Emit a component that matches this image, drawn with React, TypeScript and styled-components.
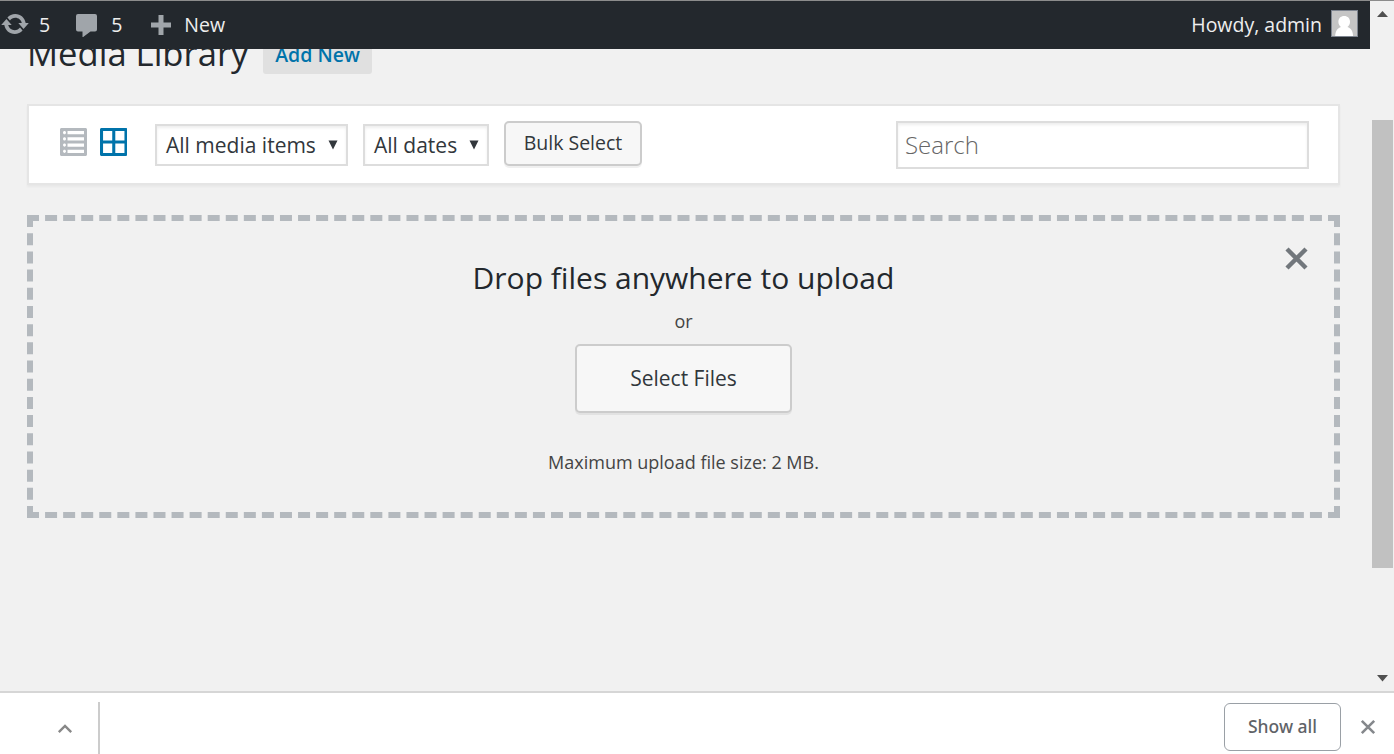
import React from "react";
import styled, { createGlobalStyle } from "styled-components";

const GlobalStyle = createGlobalStyle`
  * { box-sizing: border-box; }
  body {
    margin: 0;
    background: #f1f1f1;
    font-family: "Open Sans", "Noto Sans", sans-serif;
    color: #444;
    overflow: hidden;
  }
  button, input { font-family: inherit; margin: 0; }
  svg { display: block; flex: none; }
`;

const Window = styled.div`
  width: 1394px;
  height: 754px;
  display: flex;
  flex-direction: column;
  border-top: 1px solid #8c8c8c;
  overflow: hidden;
`;

const Viewport = styled.div`
  height: 690px;
  display: flex;
  flex: none;
`;

const Screen = styled.div`
  width: 1370px;
  display: flex;
  flex-direction: column;
`;

const AdminBar = styled.header`
  height: 48px;
  flex: none;
  background: #23282d;
  color: #eee;
  display: flex;
  align-items: center;
  padding: 0 12px 0 0;
  font-size: 19.5px;
`;

const BarItem = styled.div<{ $gap: number; $before?: number }>`
  display: flex;
  align-items: center;
  gap: ${(p) => p.$gap}px;
  margin-left: ${(p) => p.$before ?? 0}px;
  line-height: 30px;
  white-space: nowrap;
`;

const RefreshIcon = styled.svg`
  margin-bottom: 2px;
`;

const Account = styled(BarItem)`
  margin-left: auto;
`;

const Avatar = styled.span`
  width: 27px;
  height: 27px;
  margin-top: -3px;
  border: 1px solid #7e8590;
  background: #c5c5c5;
  overflow: hidden;
`;

const Body = styled.main`
  flex: 1;
  min-height: 0;
  overflow: hidden;
  padding: 0 30px 0 27px;
  display: flex;
  flex-direction: column;
`;

const Heading = styled.div`
  display: flex;
  align-items: flex-end;
  height: 44px;
  margin-top: -19px;
  margin-bottom: 30px;
  flex: none;
`;

const Title = styled.h1`
  margin: 0;
  font-size: 34.6px;
  line-height: 42px;
  font-weight: 400;
  color: #23282d;
  width: 236px;
  white-space: nowrap;
`;

const AddNew = styled.button`
  width: 109px;
  height: 39px;
  border: 0;
  border-radius: 3px;
  background: #e0e0e0;
  color: #0073aa;
  font-size: 19.5px;
  font-weight: 600;
  line-height: 39px;
  padding: 0;
`;

const Toolbar = styled.section`
  height: 81px;
  flex: none;
  display: flex;
  align-items: flex-start;
  padding: 15px 29px 0 31px;
  background: #fff;
  border: 2px solid #e5e5e5;
  box-shadow: 0 2px 2px rgba(0, 0, 0, 0.04);
`;

const Views = styled.div`
  display: flex;
  gap: 12.5px;
  margin: 7px 28px 0 0;
`;

const Select = styled.div<{ $width: number }>`
  width: ${(p) => p.$width}px;
  height: 42px;
  margin: 3px 15px 0 0;
  padding: 0 8px 0 9px;
  display: flex;
  align-items: center;
  justify-content: space-between;
  border: 2px solid #ddd;
  box-shadow: inset 0 2px 3px rgba(0, 0, 0, 0.07);
  color: #32373c;
  font-size: 21px;
  white-space: nowrap;
`;

const Button = styled.button<{ $large?: boolean }>`
  width: ${(p) => (p.$large ? 217 : 138)}px;
  height: ${(p) => (p.$large ? 69 : 45)}px;
  padding: 0 0 2px;
  border: 2px solid #ccc;
  border-radius: 5px;
  background: #f7f7f7;
  box-shadow: 0 2px 0 rgba(0, 0, 0, 0.06);
  color: #32373c;
  font-size: ${(p) => (p.$large ? 21 : 19.5)}px;
`;

const Search = styled.input`
  width: 413px;
  height: 48px;
  margin-left: auto;
  padding: 0 7px 2px;
  border: 2px solid #ddd;
  border-radius: 0;
  background: #fff;
  box-shadow: inset 0 2px 3px rgba(0, 0, 0, 0.07);
  font-size: 24px;
  font-weight: 300;
  outline: none;
  &::placeholder { color: #666; opacity: 1; }
`;

const DropZone = styled.section`
  position: relative;
  height: 303px;
  flex: none;
  margin-top: 30px;
  border: 6px dashed #b4b9be;
  display: flex;
  flex-direction: column;
  align-items: center;
`;

const DropTitle = styled.h2`
  margin: 36px 0 0;
  font-size: 30px;
  line-height: 42px;
  font-weight: 400;
  color: #23282d;
  white-space: nowrap;
`;

const Note = styled.p<{ $top: number }>`
  margin: ${(p) => p.$top}px 0 0;
  font-size: 18px;
  line-height: 28px;
  white-space: nowrap;
`;

const SelectFiles = styled.div`
  margin-top: 9px;
  height: 69px;
`;

const Close = styled.span`
  position: absolute;
  right: 26px;
  top: 26px;
`;

const Scrollbar = styled.aside`
  width: 24px;
  padding: 9px 1px 9px 2px;
  background: #f1f1f1;
  display: flex;
  flex-direction: column;
  align-items: center;
`;

const Thumb = styled.div`
  width: 21px;
  height: 448px;
  margin-top: 103px;
  margin-bottom: auto;
  background: #c1c1c1;
`;

const Shelf = styled.footer`
  flex: 1;
  display: flex;
  align-items: flex-start;
  background: #fff;
  border-top: 2px solid #d6d6d6;
  padding-right: 18px;
`;

const Download = styled.div`
  width: 100px;
  height: 52px;
  margin-top: 9px;
  border-right: 2px solid #ccc;
  padding: 22px 0 0 57px;
`;

const ShowAll = styled.button`
  width: 117px;
  height: 48px;
  margin: 10px 19px 0 auto;
  padding: 0 0 2px;
  border: 1px solid #9aa0a6;
  border-radius: 6px;
  background: #fff;
  color: #5f6368;
  font-family: "Noto Sans", "Open Sans", sans-serif;
  font-size: 17.5px;
  font-weight: 500;
`;

const Dismiss = styled.span`
  margin-top: 26px;
`;

const Arrow = () => (
  <svg width="10" height="10" viewBox="0 0 10 10">
    <path d="M0.500 0.500h9L5 9.600z" fill="#32373c" />
  </svg>
);

export default function App() {
  return (
    <>
      <GlobalStyle />
      <Window>
        <Viewport>
          <Screen>
            <AdminBar>
              <BarItem $gap={9}>
                <RefreshIcon width="30" height="30" viewBox="0 0 20 20" fill="#a0a5aa">
                  <path d="M10.2 3.28c3.53 0 6.43 2.61 6.92 6h2.08l-3.5 4-3.5-4h2.32c-.45-1.97-2.21-3.45-4.32-3.45-1.45 0-2.73.71-3.54 1.78L4.95 5.66C6.23 4.2 8.11 3.28 10.2 3.28zm-.4 13.44c-3.52 0-6.43-2.61-6.92-6H.8l3.5-4c1.17 1.33 2.33 2.67 3.5 4H5.48c.45 1.97 2.21 3.45 4.32 3.45 1.45 0 2.73-.71 3.54-1.78l1.71 1.95c-1.28 1.46-3.15 2.38-5.25 2.38z" />
                </RefreshIcon>
                5
              </BarItem>
              <BarItem $gap={14} $before={26}>
                <svg width="21" height="24" viewBox="0 0 21 24" fill="#a0a5aa">
                  <path d="M2 1h17q2 0 2 2v13.500q0 2-2 2h-4.500l-8 6v-6H2q-2 0-2-2V3q0-2 2-2z" />
                </svg>
                5
              </BarItem>
              <BarItem $gap={13} $before={29}>
                <svg width="20" height="20" viewBox="0 0 20 20" fill="#a0a5aa">
                  <path d="M7.500 0h5v7.500H20v5h-7.500V20h-5v-7.500H0v-5h7.500z" />
                </svg>
                New
              </BarItem>
              <Account $gap={9}>
                Howdy, admin
                <Avatar>
                  <svg width="25" height="25" viewBox="0 0 25 25" fill="#fff">
                    <path d="M12.200 5c3.500 0 5.800 2.400 5.800 5.800 0 2.300-1 4.200-2.600 5.200 3.600 1.200 5.500 4 5.700 9H3.200c.2-5 2.300-7.800 5.800-9-1.600-1-2.600-2.900-2.600-5.200C6.400 7.400 8.700 5 12.200 5z" />
                  </svg>
                </Avatar>
              </Account>
            </AdminBar>
            <Body>
              <Heading>
                <Title>Media Library</Title>
                <AddNew>Add New</AddNew>
              </Heading>
              <Toolbar>
                <Views>
                  <svg width="27" height="28" viewBox="1 1 18 18" preserveAspectRatio="none" fill="#b4b9be">
                    <path d="M2 19h16c.55 0 1-.45 1-1V2c0-.55-.45-1-1-1H2c-.55 0-1 .45-1 1v16c0 .55.45 1 1 1zM4 3c.55 0 1 .45 1 1s-.45 1-1 1-1-.45-1-1 .45-1 1-1zm13 0v2H6V3h11zM4 7c.55 0 1 .45 1 1s-.45 1-1 1-1-.45-1-1 .45-1 1-1zm13 0v2H6V7h11zM4 11c.55 0 1 .45 1 1s-.45 1-1 1-1-.45-1-1 .45-1 1-1zm13 0v2H6v-2h11zM4 15c.55 0 1 .45 1 1s-.45 1-1 1-1-.45-1-1 .45-1 1-1zm13 0v2H6v-2h11z" fillRule="evenodd" />
                  </svg>
                  <svg width="27.500" height="28" viewBox="1 1 18 18" preserveAspectRatio="none" fill="#0073aa">
                    <path d="M2 1h16c.55 0 1 .45 1 1v16c0 .55-.45 1-1 1H2c-.55 0-1-.45-1-1V2c0-.55.45-1 1-1zm7.010 7.990v-6H3v6h6.010zm8 0v-6h-6v6h6zm-8 8.010v-6H3v6h6.010zm8 0v-6h-6v6h6z" />
                  </svg>
                </Views>
                <Select $width={193}>All media items<Arrow /></Select>
                <Select $width={126}>All dates<Arrow /></Select>
                <Button>Bulk Select</Button>
                <Search placeholder="Search" />
              </Toolbar>
              <DropZone>
                <Close>
                  <svg width="23" height="23" viewBox="0 0 23 23" stroke="#72777c" strokeWidth="4.400" fill="none">
                    <path d="M2 2l19 19M21 2L2 21" />
                  </svg>
                </Close>
                <DropTitle>Drop files anywhere to upload</DropTitle>
                <Note $top={8}>or</Note>
                <SelectFiles><Button $large>Select Files</Button></SelectFiles>
                <Note $top={35}>Maximum upload file size: 2 MB.</Note>
              </DropZone>
            </Body>
          </Screen>
          <Scrollbar>
            <svg width="13" height="7" viewBox="0 0 13 7" fill="#505050"><path d="M6.500 1L12 7H1z" /></svg>
            <Thumb />
            <svg width="13" height="7" viewBox="0 0 13 7" fill="#505050"><path d="M6.500 6.500L1 0h11z" /></svg>
          </Scrollbar>
        </Viewport>
        <Shelf>
          <Download>
            <svg width="16" height="10" viewBox="0 0 16 10" fill="none" stroke="#888" strokeWidth="2.400">
              <path d="M1.800 8.200L8 2l6.200 6.200" />
            </svg>
          </Download>
          <ShowAll>Show all</ShowAll>
          <Dismiss>
            <svg width="16" height="16" viewBox="0 0 16 16" fill="none" stroke="#85888c" strokeWidth="2.600">
              <path d="M1.800 1.800l12.400 12.400M14.200 1.800L1.800 14.200" />
            </svg>
          </Dismiss>
        </Shelf>
      </Window>
    </>
  );
}
